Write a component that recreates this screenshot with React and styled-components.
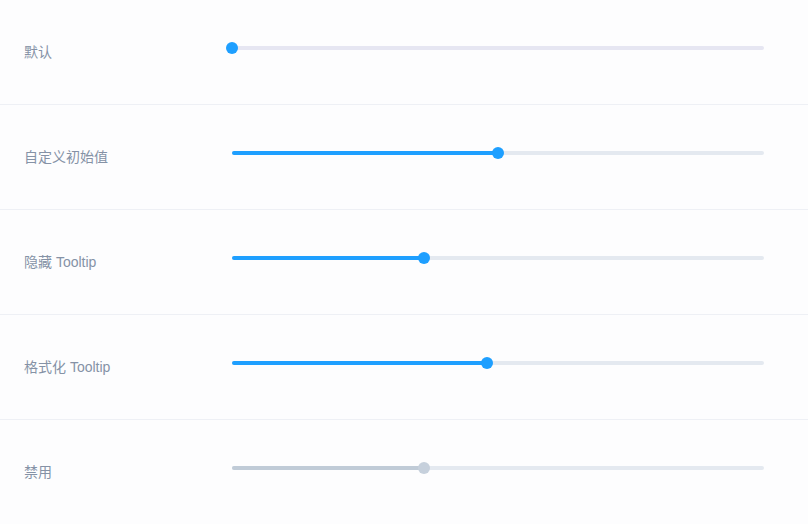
import React from 'react';
import styled, { createGlobalStyle } from 'styled-components';

const GlobalStyle = createGlobalStyle`
  html, body {
    margin: 0;
    padding: 0;
    background: #fdfdfe;
  }
  body {
    font-family: "Liberation Sans", "Noto Sans CJK SC", sans-serif;
  }
`;

const Panel = styled.div`
  width: 808px;
  background: #fdfdfe;
`;

const Row = styled.div`
  display: flex;
  align-items: center;
  height: 104px;
  padding: 0 24px;
  border-bottom: 1px solid #eef0f5;
`;

const Label = styled.div`
  width: 208px;
  flex: 0 0 208px;
  font-size: 14px;
  color: #8592a6;
  line-height: 20px;
`;

const SliderBox = styled.div`
  position: relative;
  width: 532px;
  height: 12px;
  margin-bottom: 9px;
  display: flex;
  align-items: center;
`;

const Track = styled.div`
  position: relative;
  width: 100%;
  height: 4px;
  border-radius: 2px;
  background: ${(p) => (p.$tint ? '#e6e6f2' : '#e4e9f0')};
`;

const Fill = styled.div`
  height: 100%;
  border-radius: 2px;
  background: ${(p) => (p.$disabled ? '#c0cbd7' : '#1e9fff')};
`;

const Thumb = styled.div`
  position: absolute;
  top: 50%;
  width: 12px;
  height: 12px;
  border-radius: 50%;
  transform: translate(-50%, -50%);
  background: ${(p) => (p.$disabled ? '#c6d0dc' : '#1e9fff')};
`;

function Slider({ value, disabled, tint }) {
  return (
    <SliderBox>
      <Track $tint={tint}>
        <Fill $disabled={disabled} style={{ width: `${value}%` }} />
      </Track>
      <Thumb $disabled={disabled} style={{ left: `${value}%` }} />
    </SliderBox>
  );
}

const rows = [
  { label: '默认', value: 0, tint: true },
  { label: '自定义初始值', value: 50 },
  { label: '隐藏 Tooltip', value: 36 },
  { label: '格式化 Tooltip', value: 48 },
  { label: '禁用', value: 36, disabled: true },
];

export default function App() {
  return (
    <>
      <GlobalStyle />
      <Panel>
        {rows.map((r) => (
          <Row key={r.label}>
            <Label>{r.label}</Label>
            <Slider value={r.value} disabled={r.disabled} tint={r.tint} />
          </Row>
        ))}
      </Panel>
    </>
  );
}
